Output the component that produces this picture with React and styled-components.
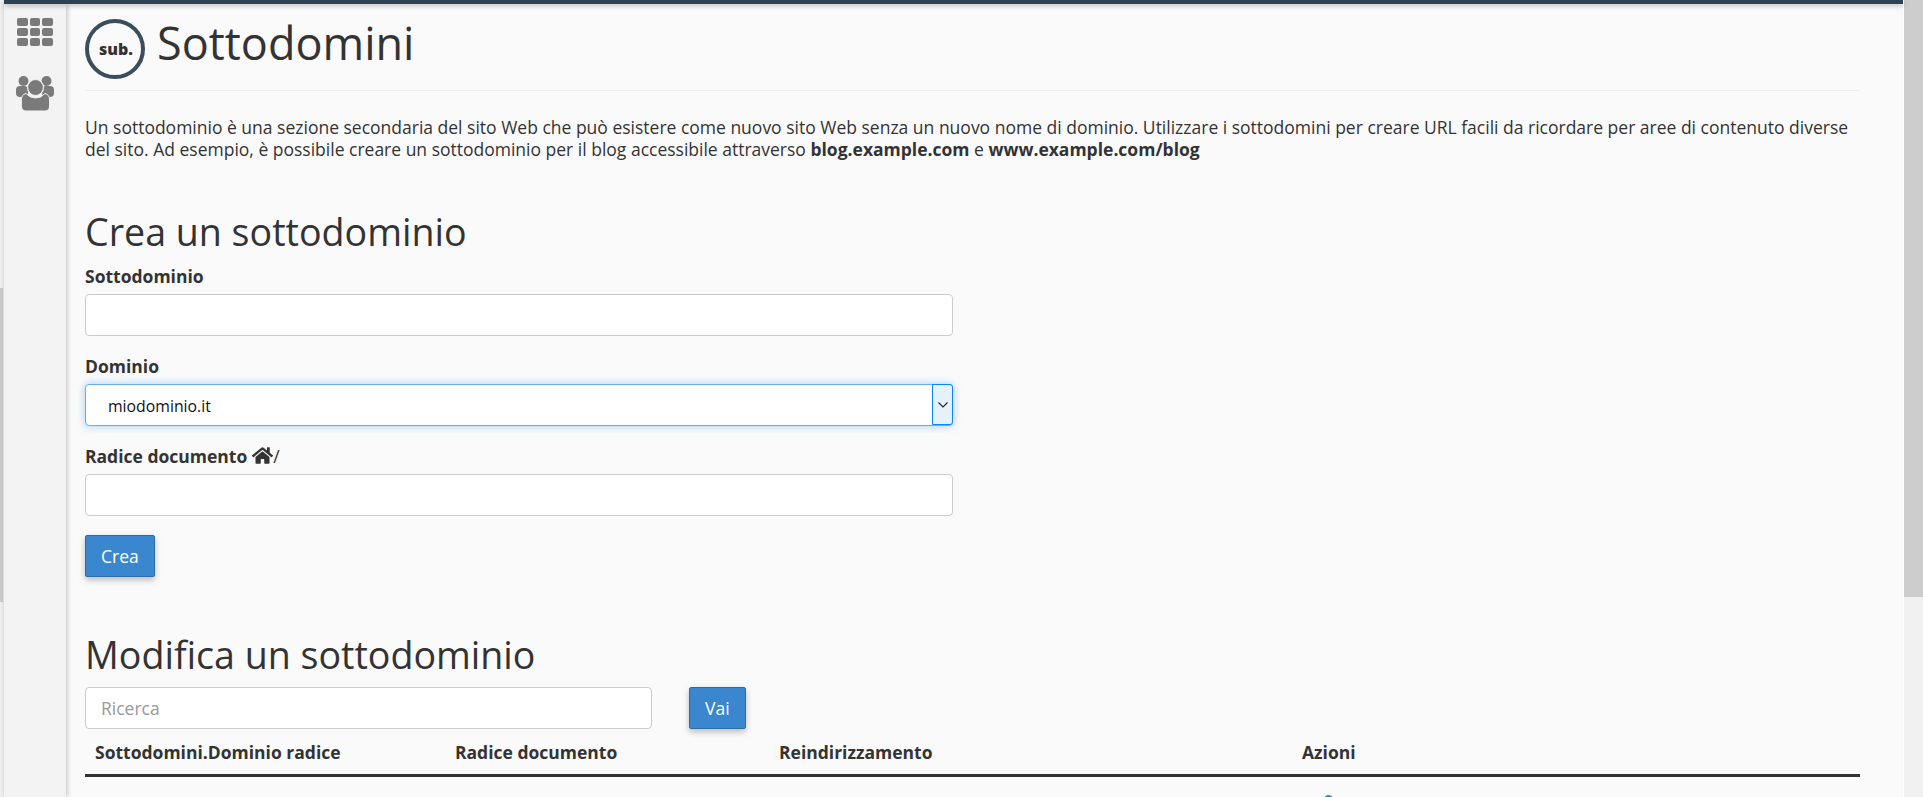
import React from "react";
import styled, { createGlobalStyle } from "styled-components";
import { FaHome } from "react-icons/fa";

const GlobalStyle = createGlobalStyle`
  html, body {
    margin: 0;
    height: 100%;
    overflow: hidden;
    background: #f0f0f0;
    font-family: "Open Sans", sans-serif;
    font-size: 17.5px;
    color: #333;
  }
  * { box-sizing: border-box; }
`;

const Shell = styled.div`
  display: flex;
  height: 797px;
  overflow: hidden;
`;

const LeftTrack = styled.div`
  width: 4px;
  flex: none;
  padding-top: 288px;
  background: #f0f0f0;
`;

const LeftThumb = styled.div`
  width: 3px;
  height: 314px;
  background: #cdcdcd;
`;

const Frame = styled.div`
  flex: 1;
  min-width: 0;
  display: flex;
  flex-direction: column;
`;

const TopBar = styled.div`
  height: 4px;
  flex: none;
  background: #2e4153;
  box-shadow: 0 2px 5px rgba(0, 0, 0, 0.25);
  position: relative;
  z-index: 2;
`;

const Body = styled.div`
  flex: 1;
  min-height: 0;
  display: flex;
`;

const Sidebar = styled.nav`
  width: 62px;
  flex: none;
  background: #f3f3f3;
  box-shadow: 1px 0 5px rgba(0, 0, 0, 0.25);
  position: relative;
  z-index: 1;
  display: flex;
  flex-direction: column;
  align-items: center;
  padding: 14px 0 0;
  gap: 30px;
`;

const GridIcon = styled.div`
  display: grid;
  grid-template-columns: repeat(3, 10.4px);
  grid-auto-rows: 8px;
  gap: 2px;
`;

const GridCell = styled.span`
  background: #7a7a7a;
  border-radius: 2px;
`;

const Main = styled.main`
  flex: 1;
  min-width: 0;
  background: #fafafa;
  padding: 0 43px 0 19px;
`;

const PageHead = styled.header`
  display: flex;
  align-items: flex-start;
  gap: 12px;
  height: 87px;
  padding-top: 15px;
  border-bottom: 1px solid #eee;
`;

const PageTitle = styled.h1`
  margin: -3px 0 0;
  font-size: 45px;
  line-height: 54px;
  font-weight: 400;
  color: #333;
`;

const Intro = styled.p`
  margin: 25px 0 0;
  font-size: 17.5px;
  line-height: 22.4px;
  color: #333;
  b { font-weight: 700; }
`;

const SectionTitle = styled.h2`
  margin: ${(p) => p.$top}px 0 0;
  font-size: 37.6px;
  line-height: 44px;
  font-weight: 400;
  color: #333;
`;

const Form = styled.form`
  width: 868px;
`;

const Field = styled.div`
  margin-top: ${(p) => p.$top}px;
`;

const Label = styled.label`
  display: flex;
  align-items: center;
  font-size: 17.5px;
  line-height: 24px;
  font-weight: 700;
  color: #333;
  margin-bottom: 6px;
  svg { margin-left: 5px; }
`;

const Slash = styled.span`
  font-weight: 400;
`;

const Input = styled.input`
  display: block;
  width: ${(p) => p.$width || "100%"};
  height: 42px;
  border: 1px solid #ccc;
  border-radius: 4px;
  background: #fff;
  padding: 0 15px;
  font: 17.5px "Open Sans", sans-serif;
  color: #333;
  &::placeholder { color: #999; opacity: 1; }
`;

const FakeSelect = styled.div`
  height: 42px;
  border: 1px solid #66afe9;
  border-radius: 4px;
  background: #fff;
  box-shadow: 0 0 8px rgba(102, 175, 233, 0.6);
  display: flex;
  align-items: center;
  justify-content: space-between;
  padding-left: 22px;
  font-size: 15.8px;
  color: #111;
`;

const SelectText = styled.span`
  padding-top: 3px;
`;

const SelectArrow = styled.span`
  width: 21px;
  height: 41px;
  border: 1px solid #0a84ff;
  border-radius: 0 3px 3px 0;
  background: #e5f1fb;
  display: flex;
  align-items: center;
  justify-content: center;
  color: #222;
  margin-right: -1px;
`;

const Button = styled.button`
  height: 42px;
  padding: 0 15px;
  border: 1px solid #2e6da4;
  border-radius: 2px;
  background: #3a87cf;
  box-shadow: 0 3px 6px rgba(0, 0, 0, 0.25);
  color: #fff;
  font: 17.5px "Open Sans", sans-serif;
  margin-top: ${(p) => p.$top || 0}px;
  flex: none;
`;

const SearchRow = styled.div`
  display: flex;
  gap: 37px;
  margin-top: 10px;
`;

const TableHead = styled.div`
  display: grid;
  grid-template-columns: 360px 324px 523px 1fr;
  padding: 0 10px;
  margin-top: 2px;
  height: 46px;
  align-items: center;
  border-bottom: 3px solid #333;
  font-size: 17.5px;
  font-weight: 700;
  color: #333;
`;

const TableRow = styled.div`
  display: grid;
  grid-template-columns: 360px 324px 523px 1fr;
  padding: 18px 10px 0;
`;

const ActionDot = styled.span`
  grid-column: 4;
  display: block;
  width: 9px;
  height: 9px;
  margin-left: 22px;
  border-radius: 50%;
  background: #3a87cf;
`;

const ScrollBar = styled.div`
  width: 20px;
  flex: none;
  background: #f0f0f0;
  border-left: 1px solid #fff;
`;

const ScrollThumb = styled.div`
  height: 597px;
  background: #cdcdcd;
`;

function SubIcon() {
  return (
    <svg width="60" height="60" viewBox="0 0 60 60" style={{ flex: "none" }}>
      <circle cx="30" cy="30" r="28" fill="#fafafa" stroke="#3b4d5d" strokeWidth="4" />
      <text x="31" y="35.5" textAnchor="middle" fontFamily="Open Sans" fontWeight="800" fontSize="16" fill="#333">
        sub.
      </text>
    </svg>
  );
}

function UsersIcon() {
  return (
    <svg width="38" height="35" viewBox="0 0 38 35" fill="#7a7a7a">
      <circle cx="7.5" cy="5" r="5" />
      <circle cx="30.5" cy="5" r="5" />
      <rect x="0" y="10" width="12" height="11" rx="4" />
      <rect x="26" y="10" width="12" height="11" rx="4" />
      <circle cx="19.5" cy="11.5" r="8" stroke="#f3f3f3" strokeWidth="1.2" />
      <path
        d="M10 17.5 Q14 22 19.5 22 Q25 22 29 17.5 Q33.6 18.5 33.6 24 V30 Q33.6 35 28.5 35 H10.5 Q5.4 35 5.4 30 V24 Q5.4 18.5 10 17.5 Z"
        stroke="#f3f3f3"
        strokeWidth="1"
      />
    </svg>
  );
}

export default function App() {
  return (
    <Shell>
      <GlobalStyle />
      <LeftTrack>
        <LeftThumb />
      </LeftTrack>
      <Frame>
        <TopBar />
        <Body>
          <Sidebar>
            <GridIcon>
              {Array.from({ length: 9 }).map((_, i) => (
                <GridCell key={i} />
              ))}
            </GridIcon>
            <UsersIcon />
          </Sidebar>
          <Main>
            <PageHead>
              <SubIcon />
              <PageTitle>Sottodomini</PageTitle>
            </PageHead>
            <Intro>
              Un sottodominio è una sezione secondaria del sito Web che può esistere come nuovo sito Web senza un nuovo
              nome di dominio. Utilizzare i sottodomini per creare URL facili da ricordare per aree di contenuto diverse
              del sito. Ad esempio, è possibile creare un sottodominio per il blog accessibile attraverso{" "}
              <b>blog.example.com</b> e <b>www.example.com/blog</b>
            </Intro>
            <SectionTitle $top={49}>Crea un sottodominio</SectionTitle>
            <Form>
              <Field $top={10}>
                <Label>Sottodominio</Label>
                <Input />
              </Field>
              <Field $top={18}>
                <Label>Dominio</Label>
                <FakeSelect>
                  <SelectText>miodominio.it</SelectText>
                  <SelectArrow>
                    <svg width="10" height="6" viewBox="0 0 10 6" fill="none" stroke="#222" strokeWidth="1.1">
                      <path d="M0.5 0.5 L5 5 L9.5 0.5" />
                    </svg>
                  </SelectArrow>
                </FakeSelect>
              </Field>
              <Field $top={18}>
                <Label>
                  Radice documento
                  <FaHome size={21} />
                  <Slash>/</Slash>
                </Label>
                <Input />
              </Field>
              <Button $top={19} type="button">
                Crea
              </Button>
            </Form>
            <SectionTitle $top={56}>Modifica un sottodominio</SectionTitle>
            <SearchRow>
              <Input $width="567px" placeholder="Ricerca" />
              <Button type="button">Vai</Button>
            </SearchRow>
            <TableHead>
              <span>Sottodomini.Dominio radice</span>
              <span>Radice documento</span>
              <span>Reindirizzamento</span>
              <span>Azioni</span>
            </TableHead>
            <TableRow>
              <ActionDot />
            </TableRow>
          </Main>
        </Body>
      </Frame>
      <ScrollBar>
        <ScrollThumb />
      </ScrollBar>
    </Shell>
  );
}
